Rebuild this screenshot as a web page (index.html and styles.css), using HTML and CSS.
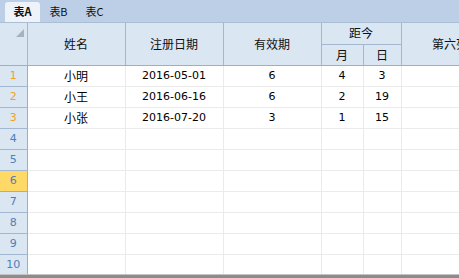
FILE: index.html
```html
<!DOCTYPE html>
<html lang="zh">
<head>
  <meta charset="UTF-8" />
  <title>表格</title>
  <link rel="stylesheet" href="styles.css">
</head>
<body>
  <div class="tabs">
    <span class="tab active">表A</span>
    <span class="tab">表B</span>
    <span class="tab">表C</span>
  </div>

  <div class="sheet">
    <table class="grid">
      <colgroup>
        <col class="c-idx"><col class="c-wide"><col class="c-wide"><col class="c-wide"><col class="c-m"><col class="c-d"><col class="c-wide">
      </colgroup>
      <thead>
        <tr>
          <th class="corner" rowspan="2"><span class="tri"></span></th>
          <th rowspan="2">姓名</th>
          <th rowspan="2">注册日期</th>
          <th rowspan="2">有效期</th>
          <th colspan="2">距今</th>
          <th rowspan="2">第六列</th>
        </tr>
        <tr>
          <th>月</th>
          <th>日</th>
        </tr>
      </thead>
      <tbody>
        <tr><td class="idx used">1</td><td>小明</td><td>2016-05-01</td><td>6</td><td>4</td><td>3</td><td></td></tr>
        <tr><td class="idx used">2</td><td>小王</td><td>2016-06-16</td><td>6</td><td>2</td><td>19</td><td></td></tr>
        <tr><td class="idx used">3</td><td>小张</td><td>2016-07-20</td><td>3</td><td>1</td><td>15</td><td></td></tr>
        <tr><td class="idx">4</td><td></td><td></td><td></td><td></td><td></td><td></td></tr>
        <tr><td class="idx">5</td><td></td><td></td><td></td><td></td><td></td><td></td></tr>
        <tr><td class="idx current">6</td><td></td><td></td><td></td><td></td><td></td><td></td></tr>
        <tr><td class="idx">7</td><td></td><td></td><td></td><td></td><td></td><td></td></tr>
        <tr><td class="idx">8</td><td></td><td></td><td></td><td></td><td></td><td></td></tr>
        <tr><td class="idx">9</td><td></td><td></td><td></td><td></td><td></td><td></td></tr>
        <tr><td class="idx">10</td><td></td><td></td><td></td><td></td><td></td><td></td></tr>
      </tbody>
    </table>
  </div>

  <div class="statusbar"></div>
</body>
</html>
```

FILE: styles.css
```css
*{margin:0;padding:0;box-sizing:border-box}
html,body{height:100%}
body{
  font-family:'Noto Sans CJK SC','DejaVu Sans',sans-serif;
  font-size:11px;
  color:#000;
  background:#fff;
  overflow:hidden;
  display:flex;
  flex-direction:column;
}

/* onglets */
.tabs{height:22px;background:#bdcfe6;display:flex;align-items:flex-end;padding-left:5px;gap:1px;flex:none}
.tab{width:35px;height:20px;line-height:19px;text-align:center;font-size:11px;color:#111}
.tab.active{background:#eef3fa;border-radius:3px 3px 0 0;font-weight:700}

/* grille */
.sheet{flex:1;overflow:hidden;border-top:1px solid #a9bdd3}
.grid{border-collapse:collapse;table-layout:fixed;width:499px}
.c-idx{width:27px}
.c-wide{width:98px}
.c-m{width:42px}
.c-d{width:38px}

.grid th{
  height:21px;background:#dbe6f3;font-weight:400;font-size:12px;color:#111;
  border:1px solid #a3b8d0;border-top:none;text-align:center;line-height:20px;white-space:nowrap
}
.grid thead tr:last-child th,.grid th[rowspan]{border-bottom:1px solid #98b0cb}
.grid th.corner{vertical-align:top;position:relative;border-left:none}
.tri{position:absolute;top:6px;right:3px;width:0;height:0;border-left:8px solid transparent;border-bottom:8px solid #a8b2be}

.grid td{
  height:21px;border:1px solid #ebebeb;border-top:none;text-align:center;
  font-size:11px;line-height:20px;font-family:'DejaVu Sans','Noto Sans CJK SC',sans-serif
}
.grid td:nth-child(2){font-family:'Noto Sans CJK SC',sans-serif;font-size:12px}
.grid td.idx{background:#dbe6f3;color:#4b80b8;border:1px solid #a3b8d0;border-top:none;border-left:none;border-right:1px solid #97aec8}
.grid td.used{color:#f2a219}
.grid td.current{background:#ffd966;color:#4b80b8;border-bottom:1px solid #e5a53a;border-right:1px solid #e5a53a}

.statusbar{height:4px;flex:none;background:#8c8c8c;border-top:1px solid #c4c4c4}
```
